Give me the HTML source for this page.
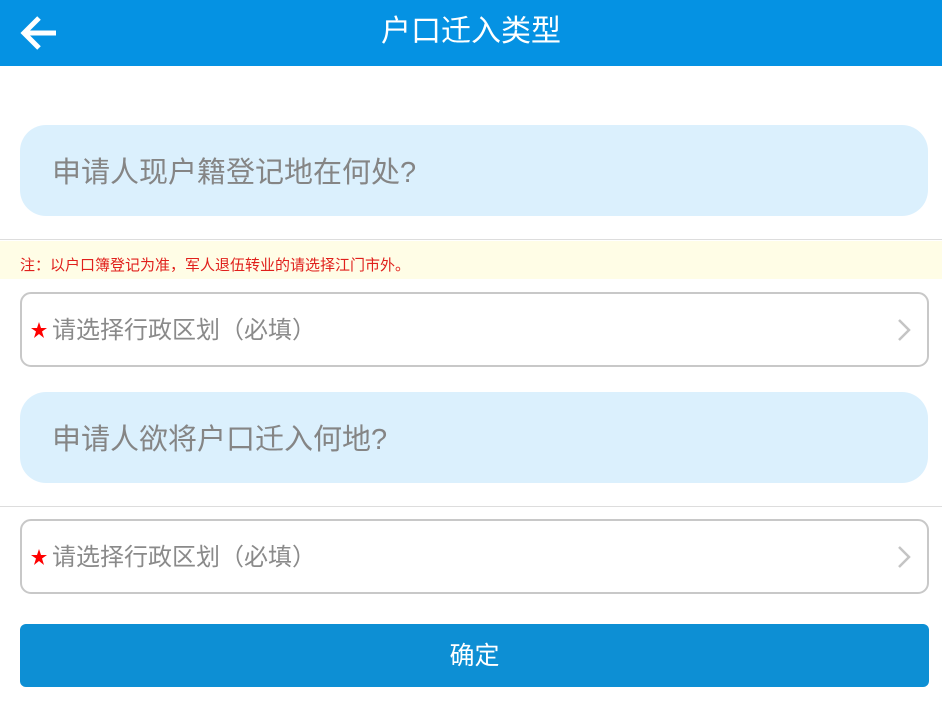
<!DOCTYPE html>
<html><head><meta charset="utf-8"><style>
*{margin:0;padding:0;box-sizing:border-box}
body{width:942px;height:709px;background:#fff;font-family:"Liberation Sans","Noto Sans CJK SC",sans-serif;position:relative;overflow:hidden}
.hd{position:absolute;left:0;top:0;width:942px;height:66px;background:#0592e3;color:#fff;font-size:30px;text-align:center;line-height:64px}
.bub{position:absolute;left:20px;width:908px;height:91px;background:#dbf0fd;border-radius:26px;color:#858585;font-size:29px;line-height:96px;padding-left:32px}
.line{position:absolute;left:0;width:942px;height:1px;background:#ddd}
.note{position:absolute;left:0;top:241px;width:942px;height:38px;background:#fffde6;color:#e0201c;font-size:15px;line-height:49px;padding-left:20px}
.sel{position:absolute;left:20px;width:909px;height:75px;border:2px solid #c8c8c8;border-radius:11px;font-size:24px;color:#8a8a8a;line-height:74px;padding-left:30px}
.star{position:absolute;left:9px;top:28px;display:block}
.chev{position:absolute;right:16px;top:24px;display:block}
.btn{position:absolute;left:20px;top:624px;width:909px;height:63px;background:#0d8fd4;border-radius:6px;color:#fff;font-size:25px;text-align:center;line-height:64px}
</style></head><body>
<div class="hd">户口迁入类型
<svg style="position:absolute;left:20px;top:15px" width="38" height="36" viewBox="0 0 38 36"><path d="M4 18H36M19 3L4 18L19 33" fill="none" stroke="#fff" stroke-width="5"/></svg></div>
<div class="bub" style="top:125px">申请人现户籍登记地在何处?</div>
<div class="line" style="top:239px"></div>
<div class="note">注：以户口簿登记为准，军人退伍转业的请选择江门市外。</div>
<div class="sel" style="top:292px"><svg class="star" width="16" height="16" viewBox="0 0 16 16"><path d="M8 0L10 6H16L11 9.5L13 16L8 12L3 16L5 9.5L0 6H6Z" fill="#f00"/></svg>请选择行政区划（必填）<svg class="chev" width="14" height="24" viewBox="0 0 14 24"><path d="M2 2L12 12L2 22" fill="none" stroke="#c4c4c4" stroke-width="2.5"/></svg></div>
<div class="bub" style="top:392px">申请人欲将户口迁入何地?</div>
<div class="line" style="top:506px"></div>
<div class="sel" style="top:519px"><svg class="star" width="16" height="16" viewBox="0 0 16 16"><path d="M8 0L10 6H16L11 9.5L13 16L8 12L3 16L5 9.5L0 6H6Z" fill="#f00"/></svg>请选择行政区划（必填）<svg class="chev" width="14" height="24" viewBox="0 0 14 24"><path d="M2 2L12 12L2 22" fill="none" stroke="#c4c4c4" stroke-width="2.5"/></svg></div>
<div class="btn">确定</div>
</body></html>
